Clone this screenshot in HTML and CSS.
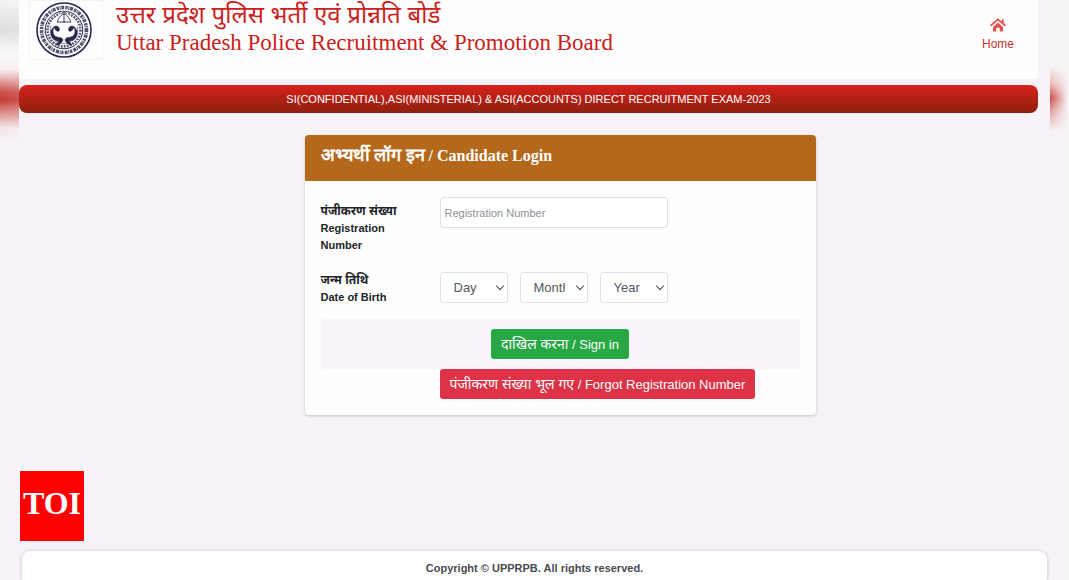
FILE: index.html
```html
<!DOCTYPE html>
<html lang="en">
<head>
    <meta charset="UTF-8">
    <meta name="viewport" content="width=device-width, initial-scale=1.0">
    <title>Candidate Login</title>
    <link rel="stylesheet" href="styles.css">
</head>
<body>
    <div class="layout">
        <div class="side"></div>
        <div class="page">
            <header class="header">
                <div class="logo">
                    <svg viewBox="0 0 56 56" width="56" height="56" fill="none" stroke="#25284a" role="img" aria-label="UPPRPB">
                        <circle cx="28" cy="28" r="27" stroke-width="1.6"/>
                        <circle cx="28" cy="28" r="22.5" stroke-width="3.6" stroke-dasharray="2.2 .8 1 .7 3 1.2" stroke-opacity=".8"/>
                        <circle cx="28" cy="28" r="18.8" stroke-width="1"/>
                        <circle cx="28" cy="28" r="16.4" stroke-width="2.6" stroke-dasharray="1.8 1.2" stroke-opacity=".8"/>
                        <circle cx="28" cy="28" r="13.6" stroke-width="1" stroke-dasharray="2.4 1" stroke-opacity=".7"/>
                        <path d="M15 21L28 8l13 13v9H15z" fill="#fff" stroke="none"/>
                        <path d="M28 9v12M25.500 12L28 9l2.500 3M21 20c2-5 5-8 7-8s5 3 7 8M21 20h14" stroke-width=".9"/>
                        <path d="M18 25c-2 4-1 9 3 10 3 1 5 0 6 3-1 3-4 5-7 5 1-2 3-3 3-4-6 0-9-5-8-10 1-3 3-5 5-5 3 0 4 3 3 5-2 1-4-1-5-4z" fill="#25284a" stroke-width=".6"/>
                        <path d="M38 25c2 4 1 9-3 10-3 1-5 0-6 3 1 3 4 5 7 5-1-2-3-3-3-4 6 0 9-5 8-10-1-3-3-5-5-5-3 0-4 3-3 5 2 1 4-1 5-4z" fill="#25284a" stroke-width=".6"/>
                    </svg>
                </div>
                <div class="titles">
                    <div class="title-hi" lang="hi">उत्तर प्रदेश पुलिस भर्ती एवं प्रोन्नति बोर्ड</div>
                    <h1>Uttar Pradesh Police Recruitment &amp; Promotion Board</h1>
                </div>
                <a class="home" href="#">
                    <svg viewBox="0 0 16 14" width="16" height="14" aria-hidden="true">
                        <path d="M1.200 7.200L8 1.400l6.800 5.800" fill="none" stroke="#e2544c" stroke-width="1.800" stroke-linecap="round" stroke-linejoin="round"/>
                        <path d="M12 1.500h1.800v4L12 4z" fill="#e2544c"/>
                        <path d="M8 4.600l5 4.300V13.500H9.700V9.800H6.300v3.700H3V8.900z" fill="#e2544c"/>
                    </svg>
                    Home
                </a>
            </header>

            <div class="banner">SI(CONFIDENTIAL),ASI(MINISTERIAL) &amp; ASI(ACCOUNTS) DIRECT RECRUITMENT EXAM-2023</div>

            <main class="content">
                <form class="card">
                    <h2><span lang="hi">अभ्यर्थी लॉग इन</span> / Candidate Login</h2>
                    <div class="card-body">
                        <div class="form-group">
                            <label for="regNo"><span lang="hi">पंजीकरण संख्या</span><br>Registration Number</label>
                            <input type="text" id="regNo" name="regNo" placeholder="Registration Number">
                        </div>
                        <div class="form-group dob-group">
                            <label for="day"><span lang="hi">जन्म तिथि</span><br>Date of Birth</label>
                            <div class="dob">
                                <div class="select"><select id="day" name="day"><option>Day</option></select></div>
                                <div class="select"><select name="month" aria-label="Month"><option>Month</option></select></div>
                                <div class="select"><select name="year" aria-label="Year"><option>Year</option></select></div>
                            </div>
                        </div>
                        <div class="actions">
                            <button type="submit" class="btn btn-success"><span lang="hi">दाखिल करना</span> / Sign in</button>
                        </div>
                        <div class="forgot">
                            <button type="button" class="btn btn-danger"><span lang="hi">पंजीकरण संख्या भूल गए</span> / Forgot Registration Number</button>
                        </div>
                    </div>
                </form>
            </main>

            <footer class="footer">Copyright © UPPRPB. All rights reserved.</footer>
        </div>
        <div class="side side-right"></div>
    </div>
    <div class="toi">TOI</div>
</body>
</html>
```

FILE: styles.css
```css
* {
    box-sizing: border-box;
}
body {
    margin: 0;
    font-family: "Liberation Sans", Arial, "Noto Sans Devanagari", sans-serif;
    background-color: #f6f2f8;
    color: #212529;
}
.layout {
    display: grid;
    grid-template-columns: 19px 1fr 19px;
    height: 100vh;
    overflow: hidden;
}
.side {
    background:
        linear-gradient(to right, transparent, rgba(255, 255, 255, 0.1)),
        linear-gradient(#f4f4f4 0, #dedede 30px, #fafafa 55px, #f8eeee 70px, #c9504a 92px, #c43a34 100px, #d98a86 112px, #f3e6ea 128px, #f6f2f8 142px);
}
.side-right {
    background:
        linear-gradient(to right, transparent, #f6f3f6 18px),
        linear-gradient(#f6f7f6 0, #f5f5f5 66px, #e9b5b3 84px, #cb4a45 98px, #e3a5a4 112px, #f6f2f8 132px);
}
.page {
    display: flex;
    flex-direction: column;
    min-width: 0;
}
.header {
    display: flex;
    align-items: flex-start;
    height: 79px;
    margin-right: 12px;
    padding-left: 9px;
    background-color: #fefefe;
}
.logo {
    width: 75px;
    height: 60px;
    padding: 1px 0 0 7px;
    border: 1px solid #f3f3f5;
}
.titles {
    flex: 1;
    margin-left: 13px;
    color: #cb2020;
    white-space: nowrap;
}
.title-hi {
    font-size: 24px;
    line-height: 30px;
}
h1 {
    margin: 0;
    font-family: "Liberation Serif", "Times New Roman", serif;
    font-size: 23px;
    font-weight: normal;
    line-height: 26px;
}
.home {
    display: flex;
    flex-direction: column;
    align-items: center;
    gap: 5px;
    margin: 18px 24px 0 0;
    color: #c8322e;
    font-size: 12px;
    line-height: 14px;
    text-decoration: none;
}
.banner {
    height: 28px;
    margin: 6px 12px 0 0;
    border-radius: 8px;
    background: linear-gradient(#d8211b, #8c200e);
    color: #fff;
    font-size: 11px;
    line-height: 28px;
    text-align: center;
}
.content {
    flex: 1;
    padding: 22px 0 0 51px;
}
.card {
    width: 511px;
    max-width: 100%;
    margin: 0 auto;
    border-radius: 4px;
    background-color: #fefefe;
    box-shadow: 0 1px 3px rgba(0, 0, 0, 0.2);
}
h2 {
    height: 46px;
    margin: 0;
    padding: 0 16px;
    border-radius: 4px 4px 0 0;
    background-color: #b4681c;
    color: #fff;
    font-family: "Liberation Serif", "Times New Roman", serif;
    font-size: 16px;
    line-height: 40px;
}
h2 span {
    font-size: 18px;
}
.card-body {
    padding: 16px;
}
.form-group {
    display: flex;
    align-items: flex-start;
    margin-bottom: 18px;
}
.form-group label {
    width: 119px;
    padding: 6px 24px 0 0;
    font-size: 11px;
    font-weight: bold;
    line-height: 17px;
}
.form-group label span {
    font-size: 12px;
    line-height: 16px;
}
.dob-group {
    margin-bottom: 13px;
}
.dob-group label {
    padding: 0;
}
.form-group input,
.select select {
    height: 31px;
    border: 1px solid #e3dfe6;
    border-radius: 3px;
    background-color: #fff;
    color: #55595f;
    font-family: inherit;
}
.form-group input {
    width: 228px;
    padding: 0 4px;
    font-size: 11px;
}
.form-group input::placeholder {
    color: #909096;
}
.dob {
    display: flex;
    gap: 12px;
}
.select {
    position: relative;
}
.select select {
    width: 68px;
    padding: 0 22px 0 13px;
    appearance: none;
    font-size: 13px;
}
.select::after {
    content: "";
    position: absolute;
    top: 11px;
    right: 5px;
    width: 5px;
    height: 5px;
    border: solid #44484d;
    border-width: 0 1px 1px 0;
    transform: rotate(45deg);
    pointer-events: none;
}
.actions {
    padding: 10px 0;
    background-color: #f9f5fb;
    text-align: center;
}
.btn {
    display: block;
    height: 30px;
    padding: 0 10px;
    border: none;
    border-radius: 3px;
    color: #fff;
    font-family: inherit;
    font-size: 13px;
    line-height: 30px;
    white-space: nowrap;
    cursor: pointer;
}
.btn span {
    font-size: 14px;
}
.btn-success {
    margin: 0 auto;
    background-color: #27a844;
}
.btn-danger {
    background-color: #de3346;
}
.forgot {
    margin-left: 119px;
}
.footer {
    flex-shrink: 0;
    height: 34px;
    margin: 0 3px -5px;
    border-radius: 8px;
    background-color: #fff;
    box-shadow: 0 0 3px 1px #d8d4da;
    color: #4b4b50;
    font-size: 11px;
    font-weight: bold;
    line-height: 34px;
    text-align: center;
}
.toi {
    position: fixed;
    bottom: 39px;
    left: 20px;
    width: 64px;
    height: 70px;
    background-color: #fe0000;
    color: #fff;
    font-family: "Liberation Serif", "Times New Roman", serif;
    font-size: 32px;
    font-weight: bold;
    line-height: 64px;
    text-align: center;
}
```
